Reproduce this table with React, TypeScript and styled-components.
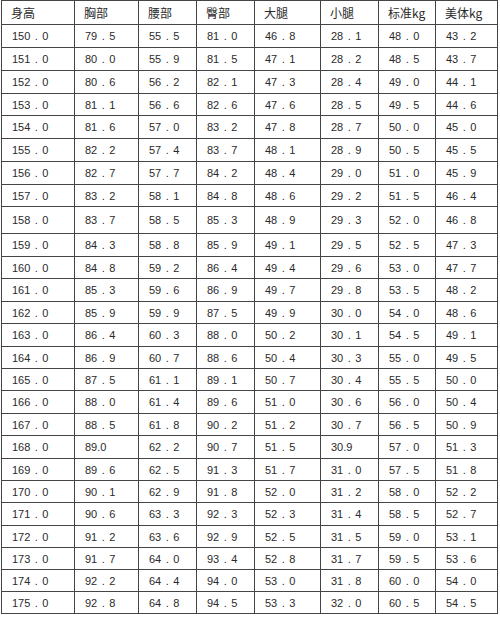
import * as React from "react";
import styled, { createGlobalStyle } from "styled-components";

const columns = ["身高", "胸部", "腰部", "臀部", "大腿", "小腿", "标准kg", "美体kg"];
const colWidths = [73, 64, 58, 58, 66, 58, 57, 62];

// height, chest, waist, hips, thigh, calf, standard kg, ideal kg
const rows: string[][] = [
  ["150.0", "79.5", "55.5", "81.0", "46.8", "28.1", "48.0", "43.2"],
  ["151.0", "80.0", "55.9", "81.5", "47.1", "28.2", "48.5", "43.7"],
  ["152.0", "80.6", "56.2", "82.1", "47.3", "28.4", "49.0", "44.1"],
  ["153.0", "81.1", "56.6", "82.6", "47.6", "28.5", "49.5", "44.6"],
  ["154.0", "81.6", "57.0", "83.2", "47.8", "28.7", "50.0", "45.0"],
  ["155.0", "82.2", "57.4", "83.7", "48.1", "28.9", "50.5", "45.5"],
  ["156.0", "82.7", "57.7", "84.2", "48.4", "29.0", "51.0", "45.9"],
  ["157.0", "83.2", "58.1", "84.8", "48.6", "29.2", "51.5", "46.4"],
  ["158.0", "83.7", "58.5", "85.3", "48.9", "29.3", "52.0", "46.8"],
  ["159.0", "84.3", "58.8", "85.9", "49.1", "29.5", "52.5", "47.3"],
  ["160.0", "84.8", "59.2", "86.4", "49.4", "29.6", "53.0", "47.7"],
  ["161.0", "85.3", "59.6", "86.9", "49.7", "29.8", "53.5", "48.2"],
  ["162.0", "85.9", "59.9", "87.5", "49.9", "30.0", "54.0", "48.6"],
  ["163.0", "86.4", "60.3", "88.0", "50.2", "30.1", "54.5", "49.1"],
  ["164.0", "86.9", "60.7", "88.6", "50.4", "30.3", "55.0", "49.5"],
  ["165.0", "87.5", "61.1", "89.1", "50.7", "30.4", "55.5", "50.0"],
  ["166.0", "88.0", "61.4", "89.6", "51.0", "30.6", "56.0", "50.4"],
  ["167.0", "88.5", "61.8", "90.2", "51.2", "30.7", "56.5", "50.9"],
  ["168.0", "89.0", "62.2", "90.7", "51.5", "30.9", "57.0", "51.3"],
  ["169.0", "89.6", "62.5", "91.3", "51.7", "31.0", "57.5", "51.8"],
  ["170.0", "90.1", "62.9", "91.8", "52.0", "31.2", "58.0", "52.2"],
  ["171.0", "90.6", "63.3", "92.3", "52.3", "31.4", "58.5", "52.7"],
  ["172.0", "91.2", "63.6", "92.9", "52.5", "31.5", "59.0", "53.1"],
  ["173.0", "91.7", "64.0", "93.4", "52.8", "31.7", "59.5", "53.6"],
  ["174.0", "92.2", "64.4", "94.0", "53.0", "31.8", "60.0", "54.0"],
  ["175.0", "92.8", "64.8", "94.5", "53.3", "32.0", "60.5", "54.5"],
];

// row heights (incl. bottom border); the 158 row is taller in the source
const rowHeights = [
  24,
  23, 23, 23, 22, 23, 23, 23, 22,
  27,
  23, 22, 23, 22, 23, 22, 22, 23, 22, 23, 22, 22, 23, 22, 22, 22, 22,
];

// the source sheet uses a wide (full-width) dot, except in a couple of cells
const narrowDot = new Set(["89.0", "30.9"]);

const Value: React.FC<{ v: string }> = ({ v }) => {
  const [whole, frac] = v.split(".");
  return (
    <>
      {whole}
      <Dot $wide={!narrowDot.has(v)}>.</Dot>
      {frac}
    </>
  );
};

const App: React.FC = () => {
  return (
    <>
      <GlobalStyle />
      <Sheet>
        {columns.map((c) => (
          <Cell key={c} $head>
            {c}
          </Cell>
        ))}
        {rows.map((r) =>
          r.map((v, i) => (
            <Cell key={r[0] + "-" + i}>
              <Value v={v} />
            </Cell>
          ))
        )}
      </Sheet>
    </>
  );
};

export default App;

/* Styles */
const GlobalStyle = createGlobalStyle`
  html, body {
    margin: 0;
    padding: 0;
    background: #ffffff;
  }
`;

const Sheet = styled.div`
  display: grid;
  grid-template-columns: ${colWidths.map((w) => `${w}px`).join(" ")};
  grid-template-rows: ${rowHeights.map((h) => `${h}px`).join(" ")};
  width: max-content;
  margin-left: 1px;
  border-top: 1px solid #454545;
  border-left: 1px solid #454545;
  color: #2a2a2a;
`;

const Cell = styled.div<{ $head?: boolean }>`
  display: flex;
  align-items: center;
  box-sizing: border-box;
  padding-left: ${(p) => (p.$head ? "9px" : "10px")};
  border-right: 1px solid #454545;
  border-bottom: 1px solid #454545;
  white-space: nowrap;
  overflow: hidden;
  font-family: ${(p) =>
    p.$head
      ? `"Noto Sans CJK SC", "Liberation Sans", sans-serif`
      : `"Liberation Sans", "Noto Sans CJK SC", sans-serif`};
  font-size: ${(p) => (p.$head ? "12px" : "11px")};
`;

const Dot = styled.span<{ $wide: boolean }>`
  display: inline-block;
  width: ${(p) => (p.$wide ? "12px" : "3px")};
  text-align: center;
`;
